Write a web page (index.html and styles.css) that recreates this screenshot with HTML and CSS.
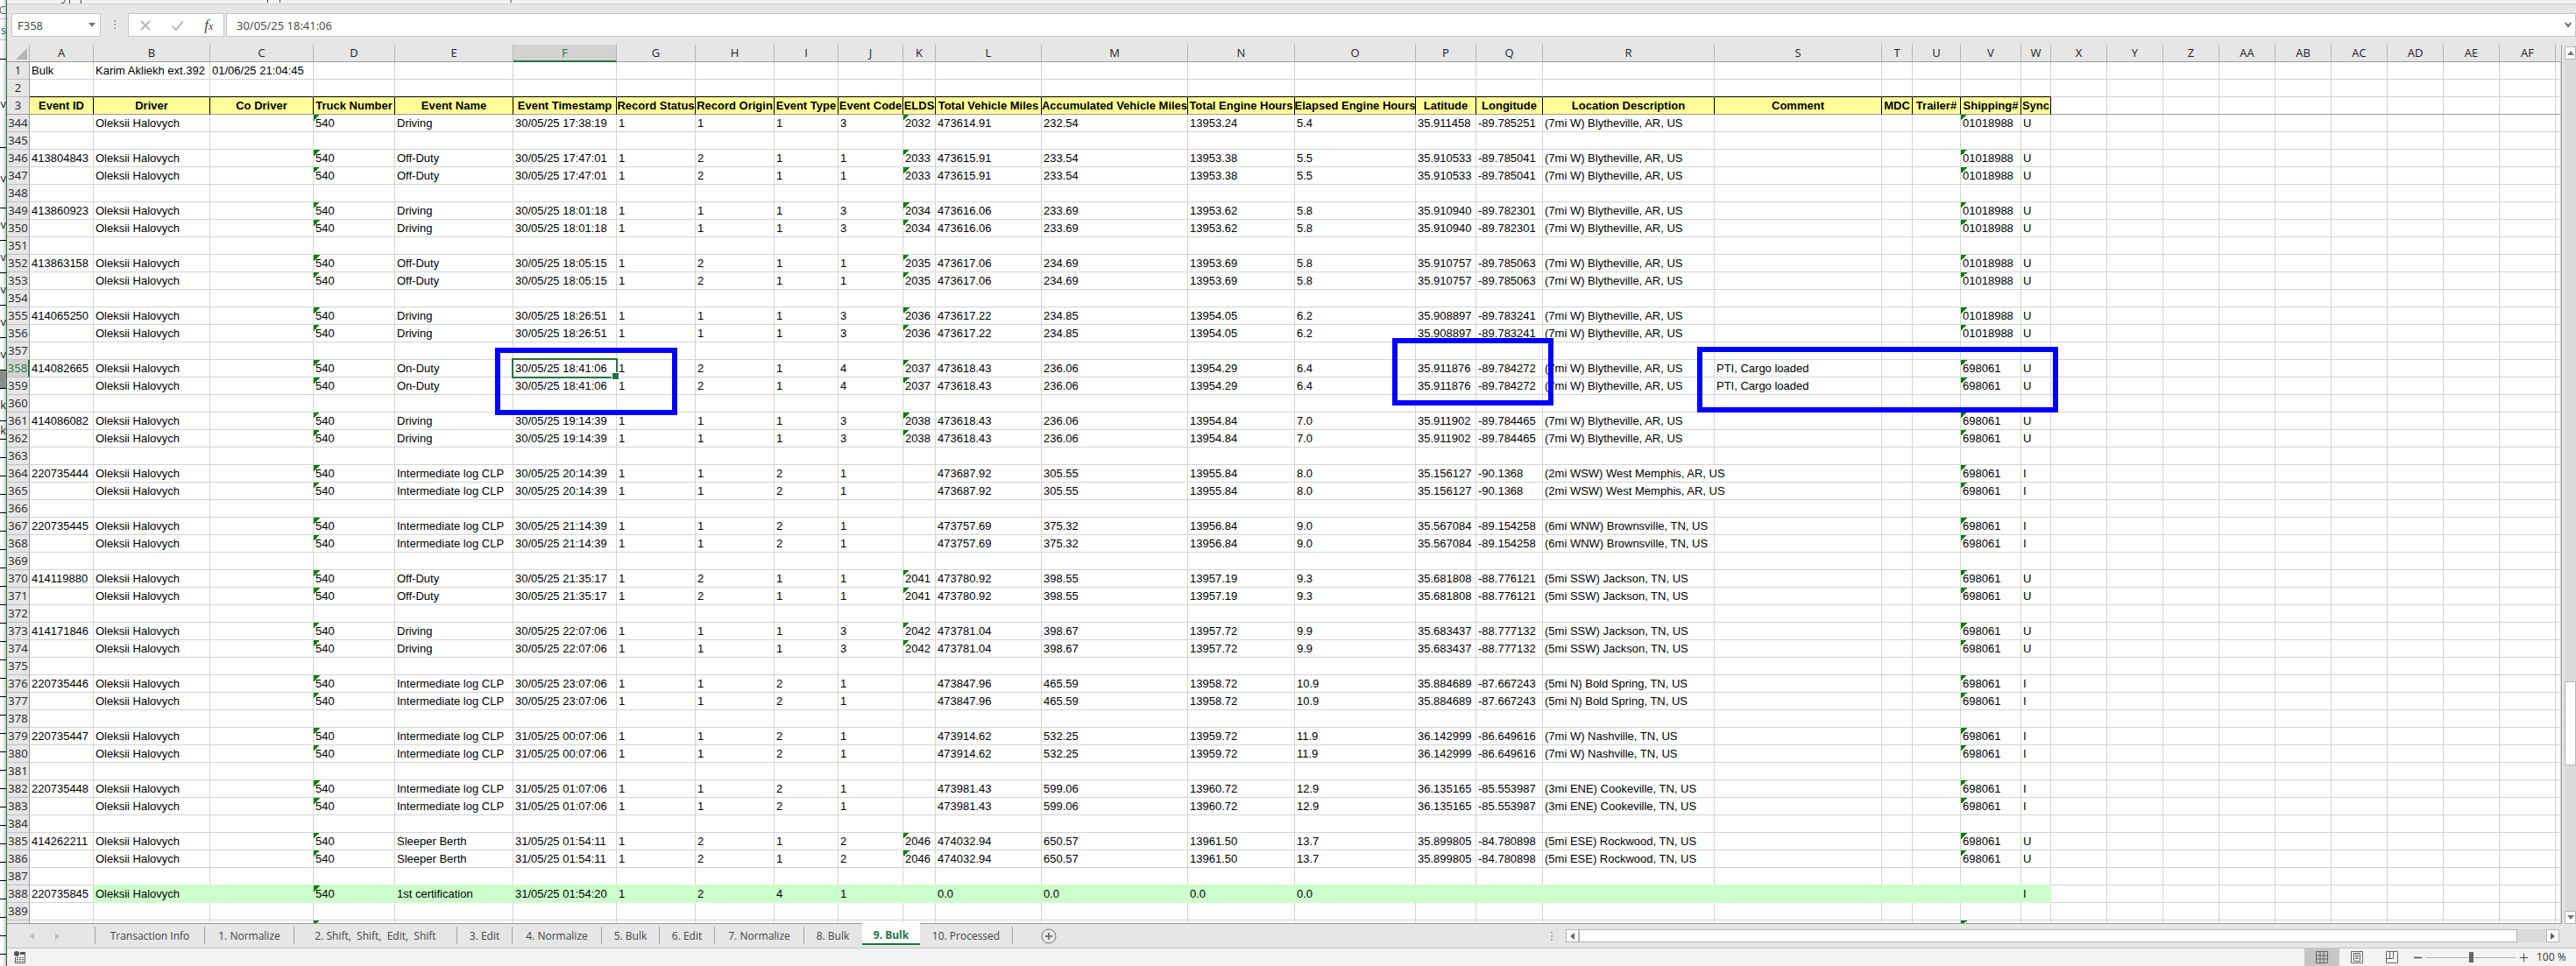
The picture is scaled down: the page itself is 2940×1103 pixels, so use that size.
FILE: index.html
```html
<!DOCTYPE html>
<html lang="en">
<head>
<meta charset="utf-8">
<title>Bulk</title>
<link rel="stylesheet" href="styles.css">
</head>
<body>
<div class="desktop">
  <aside class="behind" aria-hidden="true">
    <div class="strip h22 soft">BC</div>
    <div class="strip h24 soft blue">s</div>
    <div class="strip h22"></div>
    <div class="strip h101">ev</div>
    <div class="strip h69">ev</div>
    <div class="strip h37">ev</div>
    <div class="strip h37">ev</div>
    <div class="strip h37">ev</div>
    <div class="strip h37">ev</div>
    <div class="strip h37">ev</div>
    <div class="strip h21 dark"></div>
    <div class="strip h37">k</div>
    <div class="strip h21">k</div>
    <div class="ruled"></div>
  </aside>

  <main class="app">
    <div class="ribbon-edge">
      <svg width="560" height="4" viewBox="0 0 560 4" fill="none" stroke="#444"><path d="M66.500 0L64.500 3.500H62M71.500 0V4M84.500 0V4M297.500 0V3M311.500 0V3M575 0V3"/></svg>
    </div>
    <div class="formula-bar">
      <div class="name-box">
        <input type="text" aria-label="Name box" value="F358">
        <svg width="8" height="5" viewBox="0 0 8 5"><path d="M0 0h8L4 5z" fill="#777"/></svg>
      </div>
      <span class="grip"></span>
      <div class="formula-tools">
        <button type="button" aria-label="Cancel"><svg width="14" height="14" viewBox="0 0 14 14"><path d="M2 2l10 10M12 2L2 12" stroke="#b9b9b9" stroke-width="2" fill="none"/></svg></button>
        <button type="button" aria-label="Enter"><svg width="14" height="14" viewBox="0 0 14 14"><path d="M1 8l4 4L13 2" stroke="#b9b9b9" stroke-width="2" fill="none"/></svg></button>
        <button type="button" class="fx" aria-label="Insert function"><i>f</i><i class="x">x</i></button>
      </div>
      <div class="formula-input">
        <input type="text" aria-label="Formula" value="30/05/25 18:41:06">
        <svg width="8" height="7" viewBox="0 0 8 7"><path d="M1 1l3 4 3-4" stroke="#666" stroke-width="2" fill="none"/></svg>
      </div>
    </div>

    <div class="work">
      <div class="sheet">
        <table class="grid" id="grid"></table>
        <div class="mark mark-time"></div>
        <div class="mark mark-place"></div>
        <div class="mark mark-comment"></div>
      </div>
      <div class="vscroll">
        <button type="button" aria-label="Scroll up"><svg width="8" height="5" viewBox="0 0 8 5"><path d="M0 5h8L4 0z" fill="#777"/></svg></button>
        <div class="vtrack"><div class="vthumb"></div></div>
        <button type="button" aria-label="Scroll down"><svg width="8" height="5" viewBox="0 0 8 5"><path d="M0 0h8L4 5z" fill="#777"/></svg></button>
      </div>
    </div>

    <div class="tab-bar">
      <div class="tab-nav">
        <button type="button" aria-label="Previous sheet"><svg width="5" height="8" viewBox="0 0 5 8"><path d="M5 0v8L0 4z" fill="#bdbdbd"/></svg></button>
        <button type="button" aria-label="Next sheet"><svg width="5" height="8" viewBox="0 0 5 8"><path d="M0 0v8l5-4z" fill="#bdbdbd"/></svg></button>
      </div>
      <div class="tabs" role="tablist">
        <button type="button" role="tab" class="tab w125">Transaction Info</button>
        <button type="button" role="tab" class="tab w102">1. Normalize</button>
        <button type="button" role="tab" class="tab w186">2. Shift,&nbsp; Shift,&nbsp; Edit,&nbsp; Shift</button>
        <button type="button" role="tab" class="tab w63">3. Edit</button>
        <button type="button" role="tab" class="tab w102">4. Normalize</button>
        <button type="button" role="tab" class="tab w66">5. Bulk</button>
        <button type="button" role="tab" class="tab w63">6. Edit</button>
        <button type="button" role="tab" class="tab w102">7. Normalize</button>
        <button type="button" role="tab" class="tab w66 last">8. Bulk</button>
        <button type="button" role="tab" class="tab w66 current" aria-selected="true">9. Bulk</button>
        <button type="button" role="tab" class="tab w106">10. Processed</button>
      </div>
      <button type="button" class="add" aria-label="New sheet"><svg width="18" height="18" viewBox="0 0 18 18" fill="none" stroke="#777"><circle cx="9" cy="9" r="8"/><path d="M9 5v8M5 9h8" stroke-width="2"/></svg></button>
      <span class="grip tab-grip"></span>
      <div class="hscroll">
        <button type="button" aria-label="Scroll left"><svg width="5" height="8" viewBox="0 0 5 8"><path d="M5 0v8L0 4z" fill="#666"/></svg></button>
        <div class="htrack"><div class="hthumb"></div></div>
        <button type="button" aria-label="Scroll right"><svg width="5" height="8" viewBox="0 0 5 8"><path d="M0 0v8l5-4z" fill="#666"/></svg></button>
      </div>
    </div>

    <footer class="status">
      <button type="button" class="macro" aria-label="Record macro"><svg width="14" height="14" viewBox="0 0 14 14"><circle cx="3" cy="3" r="3" fill="#555"/><path d="M7 1h6v3H7z" fill="#555"/><path d="M1.500 7v6.500h11V4" fill="none" stroke="#555"/><path d="M3 7.500h2M6 7.500h2M9 7.500h2M3 9.500h2M6 9.500h2M9 9.500h2M3 11.500h2M6 11.500h2M9 11.500h2" stroke="#555"/></svg></button>
      <div class="views">
        <button type="button" class="on" aria-label="Normal view"><svg width="14" height="14" viewBox="0 0 14 14" fill="none" stroke="#666"><path d="M.5.5h13v13H.5zM.5 5h13M.5 9h13M5 .5v13M9 .5v13"/></svg></button>
        <button type="button" aria-label="Page layout"><svg width="14" height="14" viewBox="0 0 14 14" fill="none" stroke="#666"><path d="M.5.5h13v13H.5zM3.500 2.500h7v9h-7zM5 4.500h4M5 6.500h4M5 8.500h4"/></svg></button>
        <button type="button" aria-label="Page break preview"><svg width="14" height="14" viewBox="0 0 14 14" fill="none" stroke="#666"><path d="M.5.5h13v13H.5zM.5 8.500h8v-8M4.500.5v8"/></svg></button>
      </div>
      <button type="button" class="step" aria-label="Zoom out"><svg width="9" height="9" viewBox="0 0 9 9"><path d="M0 4.500h9" stroke="#444" stroke-width="1.500"/></svg></button>
      <input type="range" class="zoom" aria-label="Zoom" min="0" max="100" value="50">
      <button type="button" class="step" aria-label="Zoom in"><svg width="9" height="9" viewBox="0 0 9 9"><path d="M0 4.500h9M4.500 0v9" stroke="#444"/></svg></button>
      <span class="percent">100 %</span>
    </footer>
  </main>
</div>
<script src="grid.js"></script>
</body>
</html>
```

FILE: styles.css
```css
* { box-sizing: border-box; }

body {
  margin: 0;
  height: 100vh;
  overflow: hidden;
  font-family: "Open Sans", "Noto Sans", sans-serif;
  font-size: 12px;
  color: #222;
  background: #e6e6e6;
}

button, input { font: inherit; color: inherit; margin: 0; padding: 0; border: 0; background: none; }
button { display: flex; align-items: center; justify-content: center; }
svg { display: block; flex: none; }

.desktop { display: flex; height: 100%; }

/* edge of the window that lies underneath */
.behind {
  flex: none;
  width: 7px;
  display: flex;
  flex-direction: column;
  overflow: hidden;
  background: linear-gradient(90deg, #fff 40%, #c4c4c4);
  font-size: 13px;
}
.strip {
  flex: none;
  display: flex;
  align-items: center;
  justify-content: flex-end;
  border-bottom: 1px solid #000;
}
.soft { border-color: #bbb; color: #666; }
.blue { color: #2a4f9a; }
.dark { background: #8c8c8c; }
.h21 { height: 21px; }
.h22 { height: 22px; }
.h24 { height: 24px; }
.h37 { height: 37px; }
.h69 { height: 69px; }
.h101 { height: 101px; }
.ruled {
  flex: 1;
  background: repeating-linear-gradient(180deg, transparent 0 20px, #000 20px 21px);
}

.app {
  flex: 1;
  min-width: 0;
  display: flex;
  flex-direction: column;
  border-left: 1px solid #217346;
}

.ribbon-edge { flex: none; height: 5px; background: #f3f3f3; border-bottom: 1px solid #d0d0d0; }
.ribbon-edge svg { overflow: visible; }

/* formula bar */
.formula-bar { flex: none; height: 46px; display: flex; padding: 10px 0 9px 5px; font-size: 13px; }
.name-box, .formula-tools, .formula-input {
  display: flex;
  align-items: center;
  background: #fff;
  border: 1px solid #c6c6c6;
  color: #444;
}
.name-box { width: 102px; padding: 0 5px 0 6px; }
.name-box input { flex: 1; min-width: 0; }
.grip {
  flex: none;
  width: 2px;
  height: 10px;
  margin: 8px 14px 0 15px;
  background: repeating-linear-gradient(180deg, #aaa 0 2px, transparent 2px 4px);
}
.formula-tools { width: 110px; justify-content: space-around; margin-right: 2px; }
.fx { font-family: "Liberation Serif", serif; font-size: 17px; align-items: baseline; color: #444; }
.fx .x { font-size: 12px; }
.formula-input { flex: 1; padding: 0 4px 0 11px; }
.formula-input input { flex: 1; }

/* sheet */
.work { flex: 1; min-height: 0; display: flex; }
.sheet {
  flex: 1;
  min-width: 0;
  position: relative;
  overflow: hidden;
  border-bottom: 1px solid #9b9b9b;
}
.grid {
  width: 100%;
  table-layout: fixed;
  border-collapse: separate;
  border-spacing: 0;
  border-right: 1px solid #9b9b9b;
  font-family: "Liberation Sans", Arial, sans-serif;
  font-size: 13px;
  line-height: 19px;
  color: #000;
}
.grid th, .grid td { height: 20px; padding: 0; white-space: nowrap; }
.grid td {
  padding-left: 2px;
  background-color: #fff;
  border-right: 1px solid #d4d4d4;
  border-bottom: 1px solid #d4d4d4;
}
.grid td.spill { border-right-color: #fff; position: relative; z-index: 1; }
.grid td.flag {
  background-image: linear-gradient(135deg, #008000 50%, transparent 50%);
  background-size: 7px 7px;
  background-repeat: no-repeat;
}
.grid .letters th {
  font: 13px/19px "Open Sans", "Noto Sans", sans-serif;
  color: #222;
  border-right: 1px solid #b4b4b4;
  border-bottom: 1px solid #9b9b9b;
  background: #e6e6e6;
}
.grid .letters th:last-child { border-right-color: #e6e6e6; }
.grid .letters th.sel { background: #d2d2d2; color: #217346; border-bottom: 2px solid #217346; line-height: 18px; }
.grid .corner svg { margin: 3px 2px 2px auto; }
.grid .num {
  font: 13px/19px "Open Sans", "Noto Sans", sans-serif;
  color: #222;
  background: #e6e6e6;
  border-right: 1px solid #9b9b9b;
  border-bottom: 1px solid #c0c0c0;
}
.grid .num.sel { background: #d2d2d2; color: #217346; border-right: 2px solid #217346; }
.grid .over-titles td.used { border-bottom-color: #000; }
.grid .titles th.title {
  background: #ffff99;
  border-right: 1px solid #000;
}
.grid .titles th, .grid .titles td { border-bottom: 1px solid #9b9b9b; }
.title div { display: flex; justify-content: center; overflow: hidden; font-weight: bold; }
.grid .over-certified td.used { border-bottom-color: #ccffcc; }
.grid .certified td.used { background-color: #ccffcc; border-color: #ccffcc; }

.grid td.active { position: relative; }
.active::before {
  content: "";
  position: absolute;
  inset: -2px;
  border: 2px solid #217346;
}
.active::after {
  content: "";
  position: absolute;
  right: -4px;
  bottom: -4px;
  width: 7px;
  height: 7px;
  background: #217346;
  border: 1px solid #fff;
}

.mark { position: absolute; border: 6px solid #00f; z-index: 2; }
.mark-time { left: 557px; top: 346px; width: 208px; height: 77px; }
.mark-place { left: 1581px; top: 335px; width: 184px; height: 77px; }
.mark-comment { left: 1929px; top: 345px; width: 412px; height: 75px; }

.vscroll { flex: none; width: 16px; display: flex; flex-direction: column; padding: 2px 0 0 3px; }
.vscroll button { flex: none; height: 15px; background: #fff; border: 1px solid #b4b4b4; }
.vtrack { flex: 1; background: #dadada; padding-top: 710px; }
.vthumb { height: 96px; background: #fff; border: 1px solid #b4b4b4; }

/* sheet tabs */
.tab-bar {
  flex: none;
  height: 28px;
  display: flex;
  align-items: center;
  border-bottom: 1px solid #c6c6c6;
}
.tab-nav { width: 100px; display: flex; gap: 24px; padding-left: 26px; }
.tabs { display: flex; align-self: stretch; }
.tab {
  height: 20px;
  margin-top: 3px;
  border-right: 1px solid #a0a0a0;
  color: #444;
  white-space: pre;
}
.tab:first-child { border-left: 1px solid #a0a0a0; }
.tab.last { border-right-color: transparent; }
.tab.current {
  position: relative;
  height: 25px;
  margin-top: -1px;
  padding-top: 4px;
  background: #fff;
  color: #217346;
  font-weight: bold;
  border: 0;
  border-bottom: 2px solid #217346;
}
.w63 { width: 63px; }
.w66 { width: 66px; }
.w102 { width: 102px; }
.w106 { width: 106px; }
.w125 { width: 126px; }
.w186 { width: 186px; }
.add { margin-left: 32px; }
.tab-grip { margin: 0 15px 0 auto; }
.hscroll { flex: 0 0 1134px; display: flex; height: 15px; margin-right: 19px; }
.hscroll button { flex: none; width: 15px; background: #fff; border: 1px solid #b4b4b4; }
.htrack { flex: 1; background: #dadada; }
.hthumb { width: 97%; height: 100%; background: #fff; border: 1px solid #b4b4b4; }

/* status bar */
.status { flex: none; height: 20px; display: flex; align-items: stretch; background: #f3f3f3; padding-right: 14px; }
.macro { margin-left: 8px; }
.views { display: flex; margin-left: auto; margin-right: 5px; }
.views button { width: 40px; }
.views .on { background: #c6c6c6; }
.step { width: 9px; }
.zoom {
  appearance: none;
  width: 102px;
  margin: 0 5px;
  background: linear-gradient(#b0b0b0, #b0b0b0) center / 100% 1px no-repeat;
}
.zoom::-webkit-slider-thumb { appearance: none; width: 5px; height: 12px; background: #666; }
.percent { width: 31px; margin-left: 10px; line-height: 20px; text-align: right; color: #333; white-space: nowrap; }
```

FILE: grid.js
```js
const widths = [26, 73, 133, 118, 93, 135, 118, 90, 90, 73, 74, 37, 121, 167, 122, 138, 69, 76, 196, 191, 35, 55, 69, 34,
  64, 64, 64, 64, 64, 64, 64, 64, 64, 0];
const letters = "A B C D E F G H I J K L M N O P Q R S T U V W X Y Z AA AB AC AD AE AF".split(" ");
const titles = ["Event ID", "Driver", "Co Driver", "Truck Number", "Event Name", "Event Timestamp", "Record Status",
  "Record Origin", "Event Type", "Event Code", "ELDS", "Total Vehicle Miles", "Accumulated Vehicle Miles",
  "Total Engine Hours", "Elapsed Engine Hours", "Latitude", "Longitude", "Location Description", "Comment",
  "MDC", "Trailer#", "Shipping#", "Sync"];

const D = "Driving", OFF = "Off-Duty", ON = "On-Duty", INT = "Intermediate log CLP", BLY = "(7mi W) Blytheville, AR, US";
// row, id, name, time, status, origin, type, code, elds, miles, accumulated, hours, elapsed, lat, long, place, comment, shipping, sync
const events = [
  [343, "", D, "30/05/25 17:38:19", 1, 1, 1, 3, "2032", "473614.91", "232.54", "13953.24", "5.4", "35.911458", "-89.785251", BLY, "", "01018988", "U"],
  [346, "413804843", OFF, "30/05/25 17:47:01", 1, 2, 1, 1, "2033", "473615.91", "233.54", "13953.38", "5.5", "35.910533", "-89.785041", BLY, "", "01018988", "U"],
  [349, "413860923", D, "30/05/25 18:01:18", 1, 1, 1, 3, "2034", "473616.06", "233.69", "13953.62", "5.8", "35.910940", "-89.782301", BLY, "", "01018988", "U"],
  [352, "413863158", OFF, "30/05/25 18:05:15", 1, 2, 1, 1, "2035", "473617.06", "234.69", "13953.69", "5.8", "35.910757", "-89.785063", BLY, "", "01018988", "U"],
  [355, "414065250", D, "30/05/25 18:26:51", 1, 1, 1, 3, "2036", "473617.22", "234.85", "13954.05", "6.2", "35.908897", "-89.783241", BLY, "", "01018988", "U"],
  [358, "414082665", ON, "30/05/25 18:41:06", 1, 2, 1, 4, "2037", "473618.43", "236.06", "13954.29", "6.4", "35.911876", "-89.784272", BLY, "PTI, Cargo loaded", "698061", "U"],
  [361, "414086082", D, "30/05/25 19:14:39", 1, 1, 1, 3, "2038", "473618.43", "236.06", "13954.84", "7.0", "35.911902", "-89.784465", BLY, "", "698061", "U"],
  [364, "220735444", INT, "30/05/25 20:14:39", 1, 1, 2, 1, "", "473687.92", "305.55", "13955.84", "8.0", "35.156127", "-90.1368", "(2mi WSW) West Memphis, AR, US", "", "698061", "I"],
  [367, "220735445", INT, "30/05/25 21:14:39", 1, 1, 2, 1, "", "473757.69", "375.32", "13956.84", "9.0", "35.567084", "-89.154258", "(6mi WNW) Brownsville, TN, US", "", "698061", "I"],
  [370, "414119880", OFF, "30/05/25 21:35:17", 1, 2, 1, 1, "2041", "473780.92", "398.55", "13957.19", "9.3", "35.681808", "-88.776121", "(5mi SSW) Jackson, TN, US", "", "698061", "U"],
  [373, "414171846", D, "30/05/25 22:07:06", 1, 1, 1, 3, "2042", "473781.04", "398.67", "13957.72", "9.9", "35.683437", "-88.777132", "(5mi SSW) Jackson, TN, US", "", "698061", "U"],
  [376, "220735446", INT, "30/05/25 23:07:06", 1, 1, 2, 1, "", "473847.96", "465.59", "13958.72", "10.9", "35.884689", "-87.667243", "(5mi N) Bold Spring, TN, US", "", "698061", "I"],
  [379, "220735447", INT, "31/05/25 00:07:06", 1, 1, 2, 1, "", "473914.62", "532.25", "13959.72", "11.9", "36.142999", "-86.649616", "(7mi W) Nashville, TN, US", "", "698061", "I"],
  [382, "220735448", INT, "31/05/25 01:07:06", 1, 1, 2, 1, "", "473981.43", "599.06", "13960.72", "12.9", "36.135165", "-85.553987", "(3mi ENE) Cookeville, TN, US", "", "698061", "I"],
  [385, "414262211", "Sleeper Berth", "31/05/25 01:54:11", 1, 2, 1, 2, "2046", "474032.94", "650.57", "13961.50", "13.7", "35.899805", "-84.780898", "(5mi ESE) Rockwood, TN, US", "", "698061", "U"]
];

const rows = {};
for (const [row, id, name, time, status, origin, type, code, elds, ...rest] of events) {
  const [miles, acc, hours, elapsed, lat, long, place, comment, shipping, sync] = rest;
  const tail = ["Oleksii Halovych", "", "540", name, time, status, origin, type, code, elds,
    miles, acc, hours, elapsed, lat, long, place, comment, "", "", shipping, sync];
  rows[row] = [id, ...tail];
  rows[row + 1] = ["", ...tail];
}
rows[1] = ["Bulk", "Karim Akliekh ext.392", "01/06/25 21:04:45"];
rows[388] = ["220735845", "Oleksii Halovych", "", "540", "1st certification", "31/05/25 01:54:20", 1, 2, 4, 1, "",
  "0.0", "0.0", "0.0", "0.0", "", "", "", "", "", "", "", "I"];

const flagged = [3, 10, 21];
const rowClass = { 2: "over-titles", 387: "over-certified", 388: "certified" };

function dataRow(n) {
  const values = rows[n] || [];
  let html = `<tr class="${rowClass[n] || ""}"><th scope="row" class="num${n === 358 ? " sel" : ""}">${n}</th>`;
  for (let c = 0; c < 33; c++) {
    const text = values[c] === undefined ? "" : values[c];
    const cls = [];
    if (c < 23 && !(n > 386 && c === 0)) cls.push("used");
    if (n > 3 && flagged.includes(c) && (text !== "" || (n === 390 && c !== 10))) cls.push("flag");
    if (c === 17 && String(text).includes("Memphis")) cls.push("spill");
    if (n === 358 && c === 5) cls.push("active");
    html += `<td class="${cls.join(" ")}">${text}</td>`;
  }
  return html + "</tr>";
}

let html = "<colgroup>" + widths.map(w => w ? `<col style="width:${w}px">` : "<col>").join("") + "</colgroup>";
html += `<thead><tr class="letters"><th class="corner"><svg width="13" height="13" viewBox="0 0 13 13"><path d="M13 0v13H0z" fill="#b4b4b4"/></svg></th>`
  + letters.map(l => `<th scope="col"${l === "F" ? ' class="sel"' : ""}>${l}</th>`).join("") + "<th></th></tr></thead><tbody>";
html += dataRow(1) + dataRow(2);
html += '<tr class="titles"><th scope="row" class="num">3</th>'
  + titles.map(t => `<th scope="col" class="title"><div>${t}</div></th>`).join("") + "<td></td>".repeat(10) + "</tr>";
for (let n = 344; n <= 390; n++) html += dataRow(n);
document.getElementById("grid").innerHTML = html + "</tbody>";
```
